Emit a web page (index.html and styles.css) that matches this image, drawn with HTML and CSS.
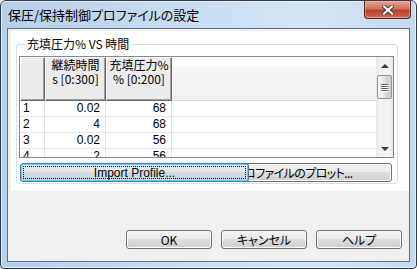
FILE: index.html
```html
<!DOCTYPE html>
<html lang="ja">
<head>
  <meta charset="UTF-8">
  <title>保圧/保持制御プロファイルの設定</title>
  <link rel="stylesheet" href="styles.css">
</head>
<body>
  <div class="window">
    <div class="titlebar">
      <span class="title">保圧/保持制御プロファイルの設定</span>
      <button class="close-btn" title="閉じる">
        <svg width="12" height="10" viewBox="0 0 12 10">
          <path d="M2 1.5 L10 8.5 M10 1.5 L2 8.5" stroke="#3b3f4a" stroke-width="4" stroke-linecap="square"/>
          <path d="M2 1.5 L10 8.5 M10 1.5 L2 8.5" stroke="#ffffff" stroke-width="2" stroke-linecap="square"/>
        </svg>
      </button>
    </div>

    <div class="client">
      <div class="panel">
        <fieldset class="group">
          <legend>充填圧力% VS 時間</legend>

          <div class="grid">
            <div class="grid-body">
              <div class="row head-row">
                <div class="hcell"></div>
                <div class="hcell">継続時間<br>s [0:300]</div>
                <div class="hcell">充填圧力%<br>% [0:200]</div>
                <div class="hfill"></div>
              </div>
              <div class="row">
                <div class="cell idx">1</div>
                <div class="cell num">0.02</div>
                <div class="cell num">68</div>
                <div class="fill"></div>
              </div>
              <div class="row">
                <div class="cell idx">2</div>
                <div class="cell num">4</div>
                <div class="cell num">68</div>
                <div class="fill"></div>
              </div>
              <div class="row">
                <div class="cell idx">3</div>
                <div class="cell num">0.02</div>
                <div class="cell num">56</div>
                <div class="fill"></div>
              </div>
              <div class="row">
                <div class="cell idx">4</div>
                <div class="cell num">2</div>
                <div class="cell num">56</div>
                <div class="fill"></div>
              </div>
            </div>

            <div class="scrollbar">
              <div class="arrow arrow-up"></div>
              <div class="thumb">
                <span></span><span></span><span></span><span></span>
              </div>
              <div class="track"></div>
              <div class="arrow arrow-down"></div>
            </div>
          </div>

          <div class="profile-buttons">
            <button class="btn import-btn"><span class="focus-ring">Import Profile...</span></button>
            <button class="btn plot-btn">プロファイルのプロット...</button>
          </div>
        </fieldset>
      </div>

      <div class="dialog-buttons">
        <button class="btn">OK</button>
        <button class="btn">キャンセル</button>
        <button class="btn">ヘルプ</button>
      </div>
    </div>
  </div>
</body>
</html>
```

FILE: styles.css
```css
* {
  box-sizing: border-box;
}

body {
  margin: 0;
  width: 417px;
  height: 269px;
  background: #ffffff;
  font-family: "Noto Sans CJK JP", "Liberation Sans", sans-serif;
  font-size: 12px;
  font-feature-settings: "palt";
  color: #000000;
  overflow: hidden;
}

.window {
  width: 417px;
  height: 269px;
  border: 1px solid #2e3b4c;
  border-radius: 6px 6px 4px 4px;
  padding: 0 6px 6px 6px;
  background: linear-gradient(to right, #b7cfea, #c9dcf2 45%, #d6e5f6 75%, #c4d8ef);
  box-shadow: inset 0 0 0 1px rgba(255, 255, 255, 0.6);
  display: flex;
  flex-direction: column;
}

/* title bar */

.titlebar {
  height: 27px;
  display: flex;
  align-items: flex-start;
  justify-content: space-between;
}

.title {
  padding: 6px 0 0 1px;
  font-size: 13px;
  line-height: 16px;
  color: #000000;
}

.close-btn {
  width: 47px;
  height: 18px;
  margin-right: -1px;
  padding: 0;
  border: 1px solid #5a2218;
  border-top: none;
  border-radius: 0 0 4px 4px;
  background: linear-gradient(#e9a594, #d0705c 45%, #b9402b 55%, #c65a44 85%, #d9836f);
  box-shadow: inset 0 0 0 1px rgba(255, 220, 210, 0.35);
  display: flex;
  align-items: center;
  justify-content: center;
}

/* client area */

.client {
  flex: 1;
  border: 1px solid #5f7189;
  background: #f0f0f0;
  display: flex;
  flex-direction: column;
}

.panel {
  margin: 2px 0 0 3px;
  height: 160px;
  background: #ffffff;
  padding: 6px 11px 0 5px;
}

.group {
  margin: 0;
  padding: 0 3px 2px 2px;
  border: 1px solid #d5dfe5;
  border-radius: 3px;
  height: 147px;
}

.group legend {
  margin-left: 6px;
  padding: 0 2px;
  line-height: 14px;
  font-size: 12px;
}

/* data grid */

.grid {
  margin-top: 5px;
  height: 102px;
  border: 1px solid #828790;
  display: flex;
  background: #ffffff;
}

.grid-body {
  flex: 1;
  overflow: hidden;
}

.row {
  display: grid;
  grid-template-columns: 25px 61px 66px 1fr;
  height: 16px;
}

.head-row {
  height: 44px;
}

.hcell {
  background: #ebebeb;
  border-top: 1px solid #ffffff;
  border-left: 1px solid #ffffff;
  border-right: 1px solid #696969;
  border-bottom: 1px solid #696969;
  box-shadow: inset -1px -1px 0 #a0a0a0;
  text-align: center;
  line-height: 14px;
}

.hfill {
  background: linear-gradient(#ffffff 0 9px, #f6f7f8 9px, #eff0f2);
  border-bottom: 1px solid #dcdcdc;
}

.cell {
  border-right: 1px solid #e2e2e2;
  border-bottom: 1px solid #e6e6e6;
  line-height: 15px;
  font-family: "Liberation Sans", "Noto Sans CJK JP", sans-serif;
}

.idx {
  padding-left: 3px;
}

.num {
  text-align: right;
  padding-right: 5px;
}

.fill {
  border-bottom: 1px solid #e6e6e6;
}

/* scrollbar */

.scrollbar {
  width: 17px;
  display: flex;
  flex-direction: column;
  background: linear-gradient(to right, #e6e6e6, #f2f2f2 20%, #f2f2f2 80%, #e6e6e6);
}

.arrow {
  height: 17px;
  display: flex;
  align-items: center;
  justify-content: center;
}

.arrow::after {
  content: "";
  border-left: 4px solid transparent;
  border-right: 4px solid transparent;
}

.arrow-up::after {
  border-bottom: 4px solid #3a3a3a;
}

.arrow-down::after {
  border-top: 4px solid #3a3a3a;
}

.thumb {
  height: 24px;
  margin: 1px 1px 0 1px;
  border: 1px solid #959595;
  border-radius: 2px;
  background: linear-gradient(to right, #f4f4f4, #e8e8e8 50%, #d6d6d6 55%, #cfcfcf);
  display: flex;
  flex-direction: column;
  align-items: center;
  justify-content: center;
  gap: 1px;
}

.thumb span {
  width: 7px;
  height: 1px;
  background: #6b6b6b;
  box-shadow: 0 1px 0 #ffffff;
}

.track {
  flex: 1;
}

/* buttons */

.btn {
  height: 19px;
  padding: 0;
  border: 1px solid #707070;
  border-radius: 3px;
  background: linear-gradient(#f2f2f2, #ebebeb 50%, #dddddd 50%, #cfcfcf);
  box-shadow: inset 0 0 0 1px #fcfcfc;
  font-family: "Noto Sans CJK JP", "Liberation Sans", sans-serif;
  font-feature-settings: "palt";
  font-size: 12px;
  line-height: 15px;
  color: #000000;
}

.profile-buttons {
  margin-top: 5px;
  margin-left: 1px;
  display: flex;
}

.import-btn {
  width: 229px;
  height: 19px;
  z-index: 1;
  position: relative;
  border-color: #3c7fb1;
  background: linear-gradient(#e7eef2, #dfe7ec 50%, #d2dde3 50%, #c8d4db);
  box-shadow: inset 0 0 0 1px #5ed2f6;
  padding: 2px;
  font-family: "Liberation Sans", sans-serif;
}

.focus-ring {
  display: block;
  height: 13px;
  line-height: 12px;
  border: 1px dotted #000000;
}

.plot-btn {
  width: 198px;
  margin-left: -55px;
  letter-spacing: -0.6px;
  white-space: nowrap;
  overflow: hidden;
}

.dialog-buttons {
  margin-top: auto;
  margin-bottom: 12px;
  margin-right: 7px;
  display: flex;
  justify-content: flex-end;
  gap: 9px;
}

.dialog-buttons .btn {
  width: 86px;
}
```
